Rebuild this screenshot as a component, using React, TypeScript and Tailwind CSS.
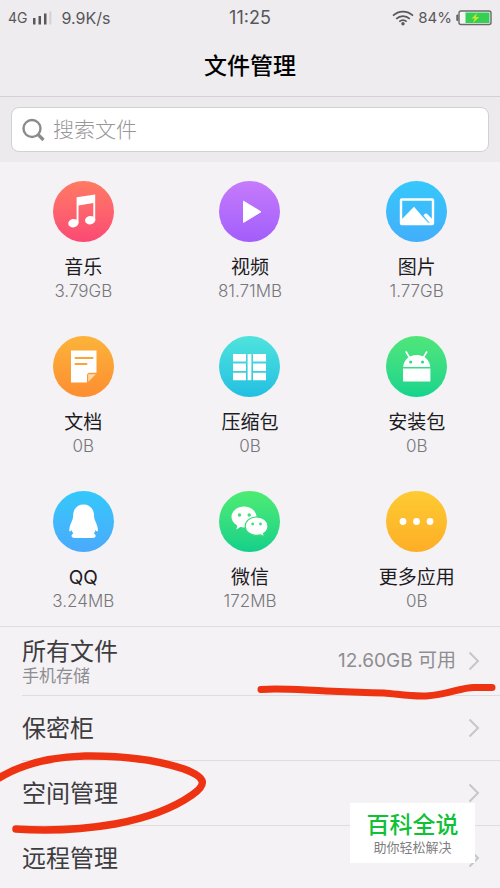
import type { ReactNode } from "react";

type Category = {
  name: string;
  size: string;
  gradient: string;
  icon: ReactNode;
};

const categories: Category[] = [
  {
    name: "音乐",
    size: "3.79GB",
    gradient: "from-[#ff7a63] to-[#fb4874]",
    icon: (
      <g fill="#fff">
        <path d="M23.600 16.200 42.200 13.400v25.800h-1.900V22l-14.800 2.400v17.600h-1.900z" />
        <ellipse cx="20.400" cy="42.200" rx="5.200" ry="4.200" transform="rotate(-12 20.400 42.200)" />
        <ellipse cx="37.200" cy="39.200" rx="5.200" ry="4.200" transform="rotate(-12 37.200 39.200)" />
      </g>
    ),
  },
  {
    name: "视频",
    size: "81.71MB",
    gradient: "from-[#c67bfb] to-[#a25dfb]",
    icon: (
      <path
        d="M24.500 20.200 42 30.800 24.500 41.400z"
        fill="#fff"
        stroke="#fff"
        strokeWidth="1"
        strokeLinejoin="round"
      />
    ),
  },
  {
    name: "图片",
    size: "1.77GB",
    gradient: "from-[#35c8fb] to-[#42aefb]",
    icon: (
      <g>
        <rect x="15" y="18.500" width="32" height="24.500" rx="0.800" fill="none" stroke="#fff" strokeWidth="2.400" />
        <path d="M15.500 38.500 28 25.800l14.500 16.700h-27z" fill="#fff" />
        <path d="M37.500 34.500c1.500-2.500 3-2.500 4.500-.8l5 5V43h-2.500z" fill="#fff" />
        <path d="m36.500 35.500 6.500 6.500" stroke="#8fcdf8" strokeWidth="1" />
      </g>
    ),
  },
  {
    name: "文档",
    size: "0B",
    gradient: "from-[#fbb33a] to-[#fd8d31]",
    icon: (
      <g>
        <path d="M18 14.500h25.500v22.200h-7.800L34 38.400v8.100H18z" fill="#fff" />
        <path d="M35.200 38.200h7.600l-7.600 7.600z" fill="#fddab0" />
        <path d="M22.500 22h17M22.500 28h11" stroke="#fba43a" strokeWidth="2" strokeLinecap="round" />
      </g>
    ),
  },
  {
    name: "压缩包",
    size: "0B",
    gradient: "from-[#4fe3dc] to-[#21bfe2]",
    icon: (
      <g fill="#fff">
        <path d="M14 18h13v7.600H14zM14 27.400h13V35H14zM14 36.800h13v7.400H14z" />
        <path d="M34 18h13v7.600H34zM34 27.400h13V35H34zM34 36.800h13v7.400H34z" />
        <path d="M28.600 18h3.800v26.200h-3.800z" />
      </g>
    ),
  },
  {
    name: "安装包",
    size: "0B",
    gradient: "from-[#4fe67a] to-[#11d48c]",
    icon: (
      <g>
        <path d="M17.200 31c.4-7 5.600-12 13.500-12s13.100 5 13.500 12z" fill="#fff" />
        <path d="M17 32.600h27.400v11.800a1.200 1.200 0 0 1-1.200 1.200h-25a1.200 1.200 0 0 1-1.200-1.200z" fill="#fff" />
        <path d="m20.200 16 3.200 5.400M40.600 16l-3.200 5.400" stroke="#fff" strokeWidth="1.700" strokeLinecap="round" />
        <circle cx="24.700" cy="26" r="1.500" fill="#2bd886" />
        <circle cx="36.500" cy="26" r="1.500" fill="#2bd886" />
      </g>
    ),
  },
  {
    name: "QQ",
    size: "3.24MB",
    gradient: "from-[#33c8fb] to-[#4aaafb]",
    icon: (
      <path
        d="M30.500 13.500c6.300 0 10.300 4.300 10.600 11 0 2 .3 3.400 1.200 5.500 1.300 3 2.700 6.200 2.600 9.200-.1 1.600-1.100 1.700-2.400-.2-.4 1.500-.9 2.500-1.700 3.500 1.400.7 2 1.600 1.800 2.700-.3 1.500-2 1.800-6 1.800h-12c-4 0-5.700-.3-6-1.800-.2-1.100.4-2 1.800-2.700-.8-1-1.300-2-1.700-3.500-1.300 1.900-2.300 1.800-2.400.2-.1-3 1.300-6.200 2.600-9.200.9-2.100 1.200-3.500 1.200-5.500.3-6.700 4.100-11 10.400-11z"
        fill="#fff"
      />
    ),
  },
  {
    name: "微信",
    size: "172MB",
    gradient: "from-[#4cec72] to-[#10d089]",
    icon: (
      <g>
        <path
          d="M25 15.500c7 0 12.500 4.700 12.500 10.500S32 36.500 25 36.500c-1.200 0-2.500-.2-3.600-.5l-4 2.600.8-4.100c-3.500-2-5.700-5-5.700-8.500 0-5.800 5.500-10.500 12.500-10.500z"
          fill="#fff"
        />
        <path
          d="M37.600 26c6.400 0 11.400 4 11.400 9.200 0 2.900-1.700 5.500-4.400 7.200l.7 3.300-3.600-1.800c-1.300.4-2.600.5-4.100.5-6.400 0-11.400-4-11.400-9.200S31.200 26 37.600 26z"
          fill="#fff"
          stroke="#32dc7b"
          strokeWidth="1.200"
        />
        <g fill="#3fe076">
          <circle cx="20.500" cy="24" r="1.700" />
          <circle cx="30.200" cy="24" r="1.700" />
          <circle cx="33.700" cy="33" r="1.400" />
          <circle cx="41.500" cy="33" r="1.400" />
        </g>
      </g>
    ),
  },
  {
    name: "更多应用",
    size: "0B",
    gradient: "from-[#fdcb32] to-[#fdae26]",
    icon: (
      <g fill="#fff">
        <circle cx="17" cy="30.500" r="3.400" />
        <circle cx="30.500" cy="30.500" r="3.400" />
        <circle cx="44" cy="30.500" r="3.400" />
      </g>
    ),
  },
];

function Chevron() {
  return (
    <svg width="12" height="20" viewBox="0 0 12 20" fill="none" aria-hidden="true">
      <path d="M1.500 1.500 10 10l-8.500 8.500" stroke="#c6c6ca" strokeWidth="2" />
    </svg>
  );
}

function StatusBar() {
  return (
    <div className="grid h-9 grid-cols-3 items-center px-2 text-base text-[#58575a]">
      <div className="flex items-center">
        <span className="text-sm">4G</span>
        <svg className="ml-1" width="20" height="14" viewBox="0 0 20 14" aria-hidden="true">
          <path d="M1 7h2.500v6.500H1zM6.500 5H9v8.500H6.500zM12 2.500h2.500v11H12z" fill="#58575a" />
          <path d="M17.300.5h2v13h-2z" fill="#d3d1d4" />
        </svg>
        <span className="ml-2.5">9.9K/s</span>
      </div>
      <time className="text-center text-lg">11:25</time>
      <div className="flex items-center justify-end">
        <svg width="22" height="16" viewBox="0 0 22 16" fill="none" aria-hidden="true">
          <g stroke="#58575a" strokeWidth="1.700">
            <path d="M1 5.600c5.600-5.400 14.400-5.400 20 0" />
            <path d="M4.200 8.800c3.900-3.700 9.700-3.700 13.600 0" />
            <path d="M7.300 11.700c2.200-2 5.200-2 7.400 0" />
          </g>
          <circle cx="11" cy="13.700" r="1.700" fill="#58575a" />
        </svg>
        <span className="ml-1 text-[15px]">84%</span>
        <svg className="ml-1" width="36" height="16" viewBox="0 0 36 16" aria-hidden="true">
          <rect x="3" y="1" width="32" height="13.500" rx="2" fill="#f6f5f6" stroke="#68676a" strokeWidth="1.400" />
          <path d="M2 5H.8v5.500H2z" fill="#68676a" stroke="#68676a" />
          <path d="M9.500 2.500h24v10.500h-24z" fill="#35cf54" />
          <path d="m21 3-5.500 5.500h3.300L17 13l6.300-6h-3.500z" fill="#c9e62c" />
        </svg>
      </div>
    </div>
  );
}

function ListRow({ title, note, value }: { title: string; note?: string; value?: string }) {
  return (
    <li className="pl-[22px]">
      <button
        type="button"
        className={`flex w-full items-center justify-between border-b border-[#dddce0] pr-5 text-left ${
          note ? "h-[69px]" : "h-[65px]"
        }`}
      >
        <span className="flex flex-col pt-0.5">
          <span className="text-2xl leading-7 text-[#3d3c3f]">{title}</span>
          {note && <span className="text-[17px] leading-5 text-[#8e8d91]">{note}</span>}
        </span>
        <span className="flex items-center gap-3">
          {value && <span className="text-[19px] text-[#8e8d91]">{value}</span>}
          <Chevron />
        </span>
      </button>
    </li>
  );
}

export default function App() {
  return (
    <div className="flex h-screen flex-col overflow-hidden bg-[#f4f2f5] font-[Inter,'Noto_Sans_CJK_SC',sans-serif]">
      <header className="border-b border-[#d3d1d5] bg-[#eeecef]">
        <StatusBar />
        <h1 className="h-[60px] text-center text-[23px] leading-[60px] font-medium text-black">文件管理</h1>
      </header>

      <search className="block bg-[#eceaed] px-[11px] py-2.5">
        <label className="flex h-[45px] items-center rounded-lg border border-[#d2d0d4] bg-white pl-2.5">
          <svg width="24" height="24" viewBox="0 0 24 24" fill="none" aria-hidden="true">
            <circle cx="10" cy="10.500" r="8.500" stroke="#8b8a8d" strokeWidth="2.400" />
            <path d="m16 16.500 5.500 5.500" stroke="#8b8a8d" strokeWidth="3.200" />
          </svg>
          <input
            type="text"
            aria-label="搜索文件"
            placeholder="搜索文件"
            className="ml-[7px] min-w-0 flex-1 bg-transparent text-[21px] font-light text-[#3d3c3f] outline-none placeholder:text-[#979699]"
          />
        </label>
      </search>

      <main className="flex min-h-0 flex-1 flex-col">
        <div className="grid grid-cols-3 gap-y-[34px] pt-[19px] pb-3.5">
          {categories.map((item) => (
            <button key={item.name} type="button" className="flex flex-col items-center">
              <span className={`rounded-full bg-linear-to-b ${item.gradient}`}>
                <svg className="block" width="61" height="61" viewBox="0 0 61 61" aria-hidden="true">
                  {item.icon}
                </svg>
              </span>
              <span className="mt-3.5 text-[19px] leading-6 text-[#1c1b1e]">{item.name}</span>
              <span className="text-[17px] leading-[22px] font-light text-[#77767a]">{item.size}</span>
            </button>
          ))}
        </div>

        <div className="relative min-h-0 flex-1 border-t border-[#dddce0]">
          <ul>
            <ListRow title="所有文件" note="手机存储" value="12.60GB 可用" />
            <ListRow title="保密柜" />
            <ListRow title="空间管理" />
            <ListRow title="远程管理" />
          </ul>

          {/* Hand-drawn marker strokes */}
          <svg
            className="pointer-events-none absolute top-0 right-0"
            width="250"
            height="90"
            viewBox="250 627 250 90"
            fill="none"
            aria-hidden="true"
          >
            <path
              d="M261 689.500c20-1.500 40 .5 65 1.500s40 1.500 58 2c14 1 24 3.500 42 3 22-1 34-8.500 48-8.500h18"
              stroke="#ee3312"
              strokeWidth="7"
              strokeLinecap="round"
              strokeLinejoin="round"
            />
          </svg>
          <svg
            className="pointer-events-none absolute top-[120px] left-0"
            width="220"
            height="100"
            viewBox="0 747 220 100"
            fill="none"
            aria-hidden="true"
          >
            <path
              d="M-4 780C20 764 50 757 85 756c40-.500 75 5 99 13 24 9 22 16 8 26-20 14-50 24-77 29-35 6-65 7.500-99 5"
              stroke="#ee3312"
              strokeWidth="7.500"
              strokeLinecap="round"
              strokeLinejoin="round"
            />
          </svg>

          <aside className="absolute top-[176px] right-[25px] flex h-[60px] w-[125px] flex-col items-center justify-center bg-white">
            <strong className="text-[23px] leading-7 font-medium text-[#0fc135]">百科全说</strong>
            <span className="text-[13px] leading-4 text-[#7f7e80]">助你轻松解决</span>
          </aside>
        </div>
      </main>
    </div>
  );
}
